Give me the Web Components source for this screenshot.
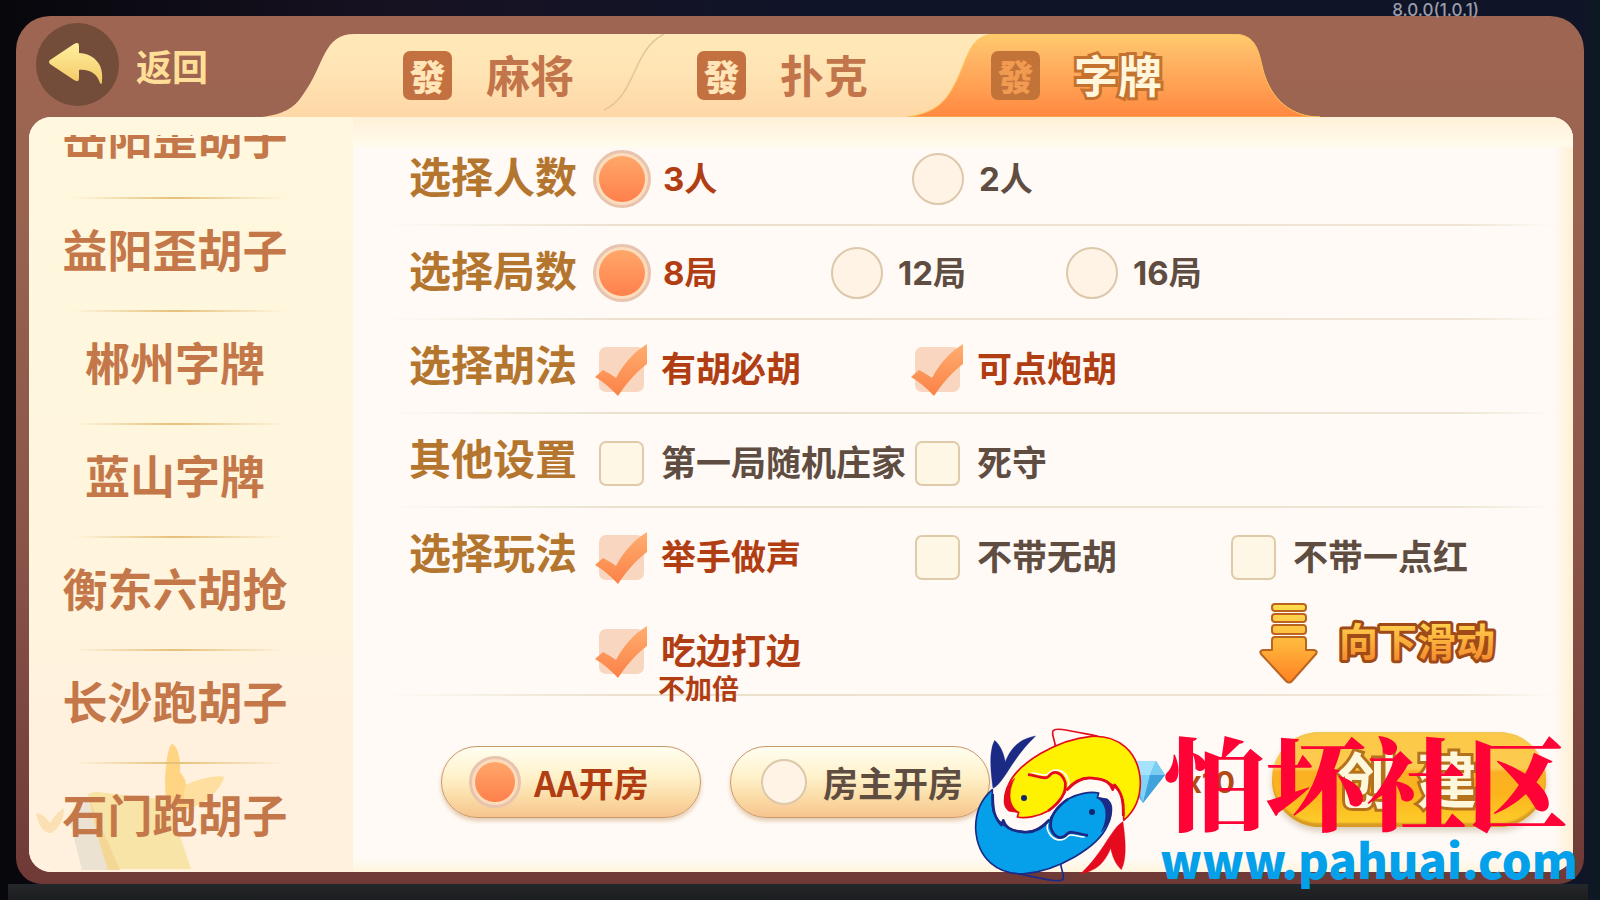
<!DOCTYPE html>
<html lang="zh-CN">
<head>
<meta charset="utf-8">
<title>创建房间</title>
<style>
  body {
    margin: 0;
    background: #0b0e19;
    font-family: "Noto Sans CJK SC", sans-serif;
    font-weight: 700;
  }
</style>
</head>
<body>

<room-stage version="8.0.0(1.0.1)">
  <back-button slot="header">返回</back-button>
  <tab-bar slot="header">
    <tab-item>麻将</tab-item>
    <tab-item>扑克</tab-item>
    <tab-item active>字牌</tab-item>
  </tab-bar>

  <side-list slot="side" scroll="49">
    <side-item>岳阳歪胡子</side-item>
    <side-item>益阳歪胡子</side-item>
    <side-item>郴州字牌</side-item>
    <side-item>蓝山字牌</side-item>
    <side-item>衡东六胡抢</side-item>
    <side-item>长沙跑胡子</side-item>
    <side-item>石门跑胡子</side-item>
  </side-list>

  <option-row label="选择人数">
    <option-item type="radio" name="players" checked>3人</option-item>
    <option-item type="radio" name="players">2人</option-item>
  </option-row>
  <option-row label="选择局数" narrow>
    <option-item type="radio" name="rounds" checked>8局</option-item>
    <option-item type="radio" name="rounds">12局</option-item>
    <option-item type="radio" name="rounds">16局</option-item>
  </option-row>
  <option-row label="选择胡法">
    <option-item type="checkbox" checked>有胡必胡</option-item>
    <option-item type="checkbox" checked>可点炮胡</option-item>
  </option-row>
  <option-row label="其他设置">
    <option-item type="checkbox">第一局随机庄家</option-item>
    <option-item type="checkbox">死守</option-item>
  </option-row>
  <option-row label="选择玩法">
    <option-item type="checkbox" checked>举手做声</option-item>
    <option-item type="checkbox">不带无胡</option-item>
    <option-item type="checkbox">不带一点红</option-item>
    <option-item type="checkbox" note="不加倍" checked>吃边打边</option-item>
    <scroll-hint></scroll-hint>
  </option-row>

  <room-footer slot="footer">
    <option-item type="radio" name="payer" pill checked>AA开房</option-item>
    <option-item type="radio" name="payer" pill>房主开房</option-item>
    <gem-price>x10</gem-price>
    <create-button></create-button>
  </room-footer>
</room-stage>

<site-mark></site-mark>

<script>
// small helper: open shadow root with markup
function render (el, html) {
  el.attachShadow({ mode: 'open' }).innerHTML = html
}

class RoomStage extends HTMLElement {
  constructor () {
    super()
    render(this, `
    <style>
    :host {
      display: flex;
      box-sizing: border-box;
      position: relative;
      height: 100vh;
      padding: 16px;
      background:
        linear-gradient(#25282a, #1b1d1f) 8px 100% / calc(100% - 20px) 16px no-repeat,
        linear-gradient(90deg, #07080d, transparent 20px calc(100% - 16px), #0d1a22),
        linear-gradient(90deg, #07070c, #171222 25%, #101428 50%, #0f1526);
    }
    .version {
      position: absolute;
      top: 0;
      right: 121px;
      font: 500 17px/20px Inter, sans-serif;
      color: #9a9dab;
      z-index: 1;
    }
    .frame {
      flex: 1;
      display: flex;
      flex-direction: column;
      padding: 0 11px 12px 13px;
      border-radius: 34px 34px 26px 26px;
      background: linear-gradient(#9e6552, #9a6451 20%, #8a5449 60%, #6f3a36);
    }
    header {
      display: flex;
      flex: 0 0 101px;
      align-items: flex-end;
    }
    .board {
      flex: 1;
      min-height: 0;
      display: flex;
      overflow: hidden;
      border-radius: 22px;
      background: #fffaf6;
    }
    main {
      flex: 1;
      display: flex;
      flex-direction: column;
      padding: 15px 18px 0 32px;
      background:
        linear-gradient(#fff0d8, #fffbea 28px, transparent 32px),
        linear-gradient(270deg, #fff0d4, #fffaf600 20px),
        linear-gradient(0deg, #fff5dc, #fffaf600 14px),
        #fffaf6;
    }
    </style>
    <div class="version">${this.getAttribute('version')}</div>
    <div class="frame">
      <header><slot name="header"></slot></header>
      <div class="board">
        <slot name="side"></slot>
        <main><slot></slot><slot name="footer"></slot></main>
      </div>
    </div>
  `)
  }
}

class BackButton extends HTMLElement {
  constructor () {
    super()
    render(this, `
    <style>
    :host {
      flex: 0 0 233px;
      align-self: center;
    }
    button {
      display: flex;
      align-items: center;
      gap: 17px;
      margin: 0 0 4px 7px;
      padding: 0;
      border: 0;
      background: none;
      font: inherit;
      font-size: 36px;
      line-height: 40px;
      color: #ffdf97;
    }
    svg { display: block; }
    </style>
    <button type="button">
      <svg width="83" height="83" viewBox="0 0 83 83">
        <defs><linearGradient id="g" x2="0" y2="1"><stop stop-color="#fff0a0"/><stop offset="1" stop-color="#f3c965"/></linearGradient></defs>
        <circle cx="41.5" cy="41.5" r="41.5" fill="#734c3a"/>
        <path d="M14 37 Q12 39 14 41 L38 57 Q43 60 43 55 V47 C54 46 61 51 64 60 Q66 63 66 58 C68 42 59 31 43 30 V23 Q43 18 38 21Z" fill="url(#g)"/>
      </svg>
      <slot></slot>
    </button>
  `)
  }
}

class TabBar extends HTMLElement {
  constructor () {
    super()
    render(this, `
    <style>
    :host {
      flex: 0 1 1058px;
      display: grid;
      height: 83px;
    }
    svg, nav { grid-area: 1 / 1; }
    svg { width: 100%; height: 83px; }
    nav {
      display: grid;
      grid-template-columns: repeat(3, 1fr);
      padding: 0 82px 0 94px;
    }
    </style>
    <svg viewBox="0 0 1058 83" preserveAspectRatio="none">
      <defs>
        <linearGradient id="light" x2="0" y2="1"><stop stop-color="#ffe9b8"/><stop offset=".45" stop-color="#ffe4b4"/><stop offset="1" stop-color="#ffd7a6"/></linearGradient>
        <linearGradient id="hot" x2="0" y2="1"><stop stop-color="#ffcb6c"/><stop offset=".25" stop-color="#ffb866"/><stop offset="1" stop-color="#ff8840"/></linearGradient>
      </defs>
      <path d="M0 83 C22 80 32 74 40 62 C64 30 60 0 93 0 H760 V83Z" fill="url(#light)"/>
      <path d="M342 76 C374 62 370 16 402 0" fill="none" stroke="#e3c795" stroke-width="1.5"/>
      <path d="M645 83 C667 80 679 72 687 60 C707 30 703 0 735 0 H970 C992 0 996 12 1001 36 C1009 66 1030 83 1058 83Z" fill="url(#hot)" stroke="#ffc354"/>
    </svg>
    <nav><slot></slot></nav>
  `)
  }
}

class TabItem extends HTMLElement {
  constructor () {
    super()
    render(this, `
    <style>
    :host { display: grid; }
    button {
      display: flex;
      align-items: center;
      gap: 34px;
      padding: 0 0 4px 47px;
      border: 0;
      background: none;
      font: inherit;
      font-size: 44px;
      line-height: 56px;
      color: #c2744a;
      white-space: nowrap;
    }
    i {
      width: 49px;
      margin-top: 4px;
      border-radius: 7px;
      background: #c47142;
      font-style: normal;
      font-weight: 900;
      font-size: 36px;
      line-height: 49px;
      text-align: center;
      color: #ffe5b8;
    }
    :host([active]) button {
      color: #fff6dc;
      -webkit-text-stroke: 6px #c5722f;
      paint-order: stroke fill;
    }
    :host([active]) i {
      background: #c17338;
      color: #f19a52;
      -webkit-text-stroke: 0;
    }
    </style>
    <button type="button"><i>發</i><slot></slot></button>
  `)
  }
}

class SideList extends HTMLElement {
  constructor () {
    super()
    render(this, `
    <style>
    :host {
      flex: 0 0 324px;
      position: relative;
      display: flex;
      padding-top: 18px;
      box-sizing: border-box;
      background: linear-gradient(#fff7de, #fff5de 65%, #fff1de 78%, #fff1dd);
    }
    svg {
      position: absolute;
      left: 4px;
      bottom: 2px;
    }
    nav {
      flex: 1;
      position: relative;
      overflow-y: auto;
      scrollbar-width: none;
      padding-right: 32px;
    }
    </style>
    <svg width="200" height="128" viewBox="33 742 200 128">
      <path d="M70 822 L88 799 L110 870 H82Z" fill="#ece2d2"/>
      <path d="M88 794 Q92 792 98 792 L168 800 L191 869 H108 L98 838Z" fill="#f8e4a6"/>
      <path d="M88 796 L98 838 L108 870 H120 Z" fill="#f5d795"/>
      <path d="M166 798 C163 775 168 745 172 744 C178 745 181 762 180 772 Q186 779 186 785 C198 779 216 775 224 777 C220 790 206 803 190 808 C182 811 174 806 166 798Z" fill="#ffd483"/>
      <path d="M186 785 C198 779 216 775 224 777 C220 790 206 803 190 808 C184 806 182 795 186 785Z" fill="#ffdf9f"/>
      <path d="M36 813 Q44 814 50 823 Q56 813 64 808 Q64 824 52 833 Q40 834 36 813Z" fill="#fae0b2"/>
    </svg>
    <nav><slot></slot></nav>
  `)
  }

  connectedCallback () {
    const nav = this.shadowRoot.querySelector('nav')
    requestAnimationFrame(() => {
      nav.scrollTop = Number(this.getAttribute('scroll'))
    })
  }
}

class SideItem extends HTMLElement {
  constructor () {
    super()
    render(this, `
    <style>
    :host {
      display: grid;
      box-sizing: border-box;
      height: 113px;
      padding: 0 22px;
      background: linear-gradient(90deg, transparent 15%, #e5c07a 50%, transparent 88%) 0 100% / 100% 2px no-repeat;
    }
    button {
      padding: 0 0 14px;
      border: 0;
      background: none;
      font: inherit;
      font-size: 45px;
      line-height: 56px;
      color: #c4784a;
      white-space: nowrap;
    }
    </style>
    <button type="button"><slot></slot></button>
  `)
  }
}

class OptionRow extends HTMLElement {
  constructor () {
    super()
    render(this, `
    <style>
    :host {
      display: flex;
      background: linear-gradient(90deg, transparent, #ebe0cc 20%, #efe5d2 92%, transparent) 0 100% / 100% 2px no-repeat;
    }
    h2 {
      flex: 0 0 184px;
      margin: 0;
      padding-left: 24px;
      font-size: 42px;
      line-height: 86px;
      color: #b4762f;
    }
    div {
      flex: 1;
      display: grid;
      grid-template-columns: repeat(auto-fill, 316px);
      grid-auto-rows: 94px;
    }
    :host([narrow]) div {
      grid-template-columns: repeat(auto-fill, 235px);
    }
    </style>
    <h2 id="title">${this.getAttribute('label')}</h2>
    <div role="group" aria-labelledby="title"><slot></slot></div>
  `)
  }
}

class OptionItem extends HTMLElement {
  constructor () {
    super()
    const note = this.getAttribute('note')
    render(this, `
    <style>
    :host {
      display: grid;
      position: relative;
    }
    label {
      display: flex;
      align-items: center;
      gap: 12px;
      font-size: 35px;
      line-height: 40px;
      color: #5f4d42;
      white-space: nowrap;
    }
    label:has([type=radio]) {
      font-family: Inter, "Noto Sans CJK SC", sans-serif;
      font-size: 33px;
    }
    label:has(:checked) { color: #b13d13; }
    .box {
      flex: 0 0 56px;
      display: grid;
      place-items: center;
    }
    .box:has([type=radio]) {
      flex-basis: 58px;
    }
    .box:has([type=checkbox]) { padding-top: 5px; }
    input, svg { grid-area: 1 / 1; }
    input {
      appearance: none;
      box-sizing: border-box;
      margin: 0;
    }
    [type=radio] {
      width: 52px;
      height: 52px;
      border: 2px solid #dcc8ab;
      border-radius: 50%;
      background: #fff3e6;
    }
    [type=radio]:checked {
      width: 58px;
      height: 58px;
      border: 3px solid #e8c4ae;
      background: linear-gradient(#ffa769, #ff804c) content-box, #fbdcbc;
      padding: 3px;
    }
    [type=checkbox] {
      width: 45px;
      height: 45px;
      border: 2px solid #dfcbaa;
      border-radius: 7px;
      background: #fff7e6;
    }
    [type=checkbox]:checked {
      border: 0;
      background: #f8d6c0;
    }
    svg { visibility: hidden; pointer-events: none; }
    [type=checkbox]:checked + svg { visibility: visible; }
    /* hangs over the divider under the row */
    small {
      position: absolute;
      left: 65px;
      top: 70px;
      font-size: 27px;
      line-height: 32px;
      color: #b13d13;
    }
    :host([pill]) label {
      width: 260px;
      height: 72px;
      box-sizing: border-box;
      padding-left: 24px;
      gap: 10px;
      border: 1px solid #c79a6c;
      border-radius: 36px;
      background: linear-gradient(#fffdf0, #fff3cd 40%, #fbdca6 72%, #f7c48e);
      box-shadow: 0 3px 4px #e5cbb0;
      font-family: inherit;
      font-size: 35px;
    }
    :host([pill]) [type=radio] { width: 46px; height: 46px; }
    :host([pill]) [type=radio]:checked { width: 52px; height: 52px; }
    </style>
    <label>
      <span class="box">
        <input type="${this.getAttribute('type')}" name="${this.getAttribute('name') || 'option'}">
        <svg width="52" height="52" viewBox="0 0 52 52">
          <defs><linearGradient id="g" x2="0" y2="1"><stop stop-color="#ffae70"/><stop offset="1" stop-color="#fb8146"/></linearGradient></defs>
          <path d="M0 33 L8 26 Q14 29 21 34 C29 19 39 8 52 0 V20 C41 28 31 40 23 52 Q12 40 0 33Z" fill="url(#g)"/>
        </svg>
      </span>
      <slot></slot>
    </label>
    ${note ? `<small>${note}</small>` : ''}
  `)
    this.input = this.shadowRoot.querySelector('input')
    this.input.checked = this.hasAttribute('checked')
    this.input.addEventListener('change', () => this.clearOthers())
  }

  // radios in separate shadow roots don't group by name
  clearOthers () {
    if (this.input.type !== 'radio') return
    for (const other of this.parentElement.querySelectorAll('option-item')) {
      if (other !== this) other.input.checked = false
    }
  }
}

class ScrollHint extends HTMLElement {
  constructor () {
    super()
    render(this, `
    <style>
    :host {
      grid-column: 3;
      padding-left: 34px;
    }
    svg { display: block; }
    text {
      font-size: 39px;
      stroke: #a04a18;
      stroke-width: 6px;
      stroke-linejoin: round;
      paint-order: stroke;
      fill: url(#t);
    }
    </style>
    <svg width="248" height="84" viewBox="0 0 248 84">
      <defs>
        <linearGradient id="a" gradientUnits="userSpaceOnUse" x1="0" y1="0" x2="0" y2="82"><stop stop-color="#ffe04f"/><stop offset=".5" stop-color="#ffb63c"/><stop offset="1" stop-color="#ff7f22"/></linearGradient>
        <linearGradient id="t" x2="0" y2="1"><stop offset=".2" stop-color="#ffd24d"/><stop offset=".9" stop-color="#f58a2c"/></linearGradient>
      </defs>
      <g fill="url(#a)" stroke="#bb6420" stroke-width="2" stroke-linejoin="round">
        <rect x="13" y="2" width="34" height="7" rx="3"/>
        <rect x="13" y="12" width="34" height="8" rx="3"/>
        <rect x="13" y="23" width="34" height="9" rx="3"/>
        <path d="M13 38 Q13 35 16 35 H44 Q47 35 47 38 V48 H55 Q59 49 57 52 L33 79 Q30 82 27 79 L2 52 Q0 49 4 48 H13Z"/>
      </g>
      <text x="80" y="54">向下滑动</text>
    </svg>
  `)
  }
}

class RoomFooter extends HTMLElement {
  constructor () {
    super()
    render(this, `
    <style>
    :host {
      flex: 1;
      display: flex;
      align-items: center;
      gap: 29px;
      padding: 0 9px 4px 56px;
    }
    </style>
    <slot></slot>
  `)
  }
}

class GemPrice extends HTMLElement {
  constructor () {
    super()
    render(this, `
    <style>
    :host {
      display: flex;
      align-items: center;
      gap: 18px;
      margin-left: auto;
      margin-right: 8px;
      font-family: Inter, sans-serif;
      font-size: 30px;
      line-height: 40px;
      color: #b14a14;
    }
    </style>
    <svg width="46" height="44" viewBox="0 0 46 44">
      <path d="M10 1 H36 L45 15 L23 43 L1 15Z" fill="#56b9ea"/>
      <path d="M10 1 H36 L30 15 H15Z" fill="#a5e2fb"/>
      <path d="M36 1 L45 15 H30Z" fill="#7bcdf2"/>
      <path d="M15 15 H30 L23 43Z" fill="#7fd3f6"/>
      <path d="M30 15 H45 L23 43Z" fill="#3fa2dc"/>
    </svg>
    <slot></slot>
  `)
  }
}

class CreateButton extends HTMLElement {
  constructor () {
    super()
    render(this, `
    <style>
    button {
      display: flex;
      justify-content: center;
      align-items: center;
      gap: 20px;
      width: 274px;
      height: 95px;
      margin-bottom: 6px;
      padding: 0 4px 4px 0;
      border: 0;
      border-radius: 48px;
      background: linear-gradient(#fcc945, #fcca50 38%, #fbb024 42%, #fcb41c 65%, #fdd02c);
      box-shadow: inset 0 -4px 2px #d99a25, inset 0 2px 2px #f3c653, 0 4px 6px #d9cdbb;
      font: inherit;
      font-size: 60px;
      line-height: 64px;
      color: #fff7dc;
      -webkit-text-stroke: 6px #b5721c;
      paint-order: stroke fill;
    }
    </style>
    <button type="button"><span>创</span><span>建</span></button>
  `)
  }
}

class SiteMark extends HTMLElement {
  constructor () {
    super()
    // the second fish is the first one turned half round
    const fish = (body, line) => `
      <g stroke="${line}" stroke-width="5" stroke-linejoin="round">
        <path d="M312 136 C310 115 300 100 305 90 C312 78 350 88 440 106" fill="none"/>
        <path d="M515 362 C480 380 460 450 387 519 C420 512 455 500 478 442 C485 475 495 492 510 506 C530 470 520 400 515 362Z" fill="${line}" stroke-width="1"/>
        <path d="M517 358 C550 330 568 290 567 240 C562 150 500 102 420 106 C320 115 200 185 172 250 C158 278 155 310 172 328 L202 334 L198 348 C225 353 262 346 290 330 C330 305 350 240 410 232 C465 228 514 262 517 310Z" fill="${body}"/>
        <path d="M174 330 C142 312 165 255 190 232 C172 265 168 310 200 332Z" fill="${line}" stroke-width="2"/>
        <path d="M240 216 C262 216 280 228 290 219 C310 198 342 206 352 240 C354 262 348 276 338 290" fill="none" stroke="#fff"/>
        <path d="M230 221 C255 222 280 238 292 226 C308 206 332 212 342 245 C345 275 325 306 290 330" fill="none" stroke-width="8"/>
        <path d="M345 268 C370 238 400 226 430 232 C460 234 478 246 484 266 L490 252 C512 275 516 300 516 345" fill="none" stroke-width="8"/>
      </g>
      <circle cx="218" cy="291" r="9" fill="#14266f"/>`
    render(this, `
    <style>
    :host {
      position: absolute;
      right: 22px;
      bottom: 11px;
      display: flex;
      align-items: flex-start;
      gap: 17px;
      pointer-events: none;
    }
    svg { display: block; }
    p, a {
      display: block;
      margin: 0;
      white-space: nowrap;
    }
    p {
      margin-left: 4px;
      font-family: "Noto Serif CJK SC", "Noto Sans CJK SC", sans-serif;
      font-size: 101px;
      font-weight: 900;
      line-height: 110px;
      color: #ff0336;
    }
    a {
      font-size: 47px;
      font-weight: 900;
      line-height: 48px;
      color: #05a0ea;
      text-decoration: none;
    }
    </style>
    <svg width="170" height="164" viewBox="65 72 510 492">
      ${fish('#fff200', '#e60a1e')}
      <g transform="rotate(180 320 312)">${fish('#05a0e9', '#1a2a85')}</g>
    </svg>
    <div>
      <p>怕坏社区</p>
      <a href="#">www.pahuai.com</a>
    </div>
  `)
  }
}

customElements.define('room-stage', RoomStage)
customElements.define('back-button', BackButton)
customElements.define('tab-bar', TabBar)
customElements.define('tab-item', TabItem)
customElements.define('side-list', SideList)
customElements.define('side-item', SideItem)
customElements.define('option-row', OptionRow)
customElements.define('option-item', OptionItem)
customElements.define('scroll-hint', ScrollHint)
customElements.define('room-footer', RoomFooter)
customElements.define('gem-price', GemPrice)
customElements.define('create-button', CreateButton)
customElements.define('site-mark', SiteMark)
</script>
</body>
</html>
